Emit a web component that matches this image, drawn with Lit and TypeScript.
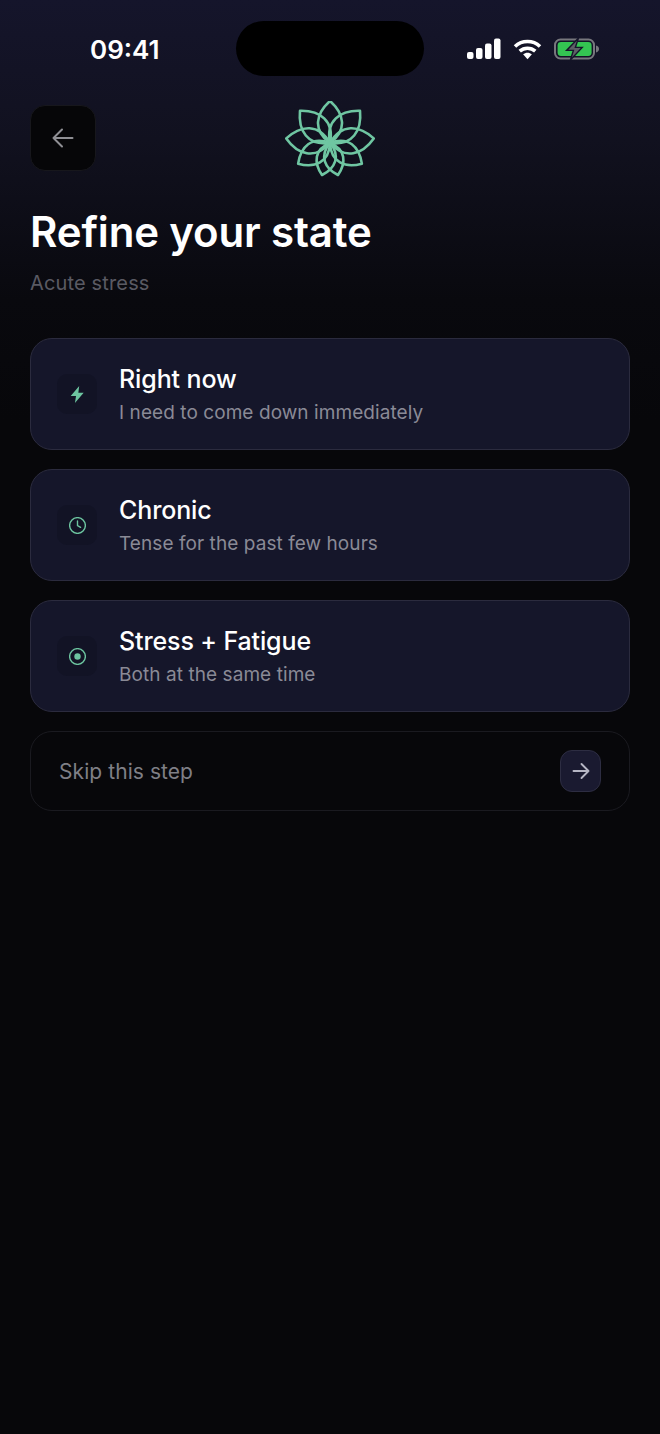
import { LitElement, css, html, svg } from "lit";
import { customElement } from "lit/decorators.js";

type Choice = {
  title: string;
  detail: string;
  icon: unknown;
};

const boltIcon = svg`<path d="M9.6 0 1.6 9.4h5L5.6 16l8.2-9.6h-5L9.6 0Z" fill="#6dc5a0" />`;
const clockIcon = svg`
  <circle cx="8" cy="8" r="7.4" fill="none" stroke="#6dc5a0" stroke-width="1.3" />
  <path d="M8 3.8V8l2.9 1.7" fill="none" stroke="#6dc5a0" stroke-width="1.3" stroke-linecap="round" />`;
const targetIcon = svg`
  <circle cx="8" cy="8" r="7.4" fill="none" stroke="#6dc5a0" stroke-width="1.3" />
  <circle cx="8" cy="8" r="3" fill="#6dc5a0" />`;

const choices: Choice[] = [
  { title: "Right now", detail: "I need to come down immediately", icon: boltIcon },
  { title: "Chronic", detail: "Tense for the past few hours", icon: clockIcon },
  { title: "Stress + Fatigue", detail: "Both at the same time", icon: targetIcon },
];

// petal angle and length, measured off the logo
const petals = [
  [0, 42],
  [-43, 44],
  [43, 44],
  [-84, 44],
  [84, 44],
  [-123, 38],
  [123, 38],
  [-166, 33],
  [166, 33],
];

@customElement("app-root")
export class AppRoot extends LitElement {
  renderStatusBar() {
    return html`<div class="status">
      <span class="time">09:41</span>
      <div class="island"></div>
      <div class="status-icons">
        <svg width="34" height="22" viewBox="0 0 34 22">
          <rect x="0" y="14" width="6.5" height="7" rx="2" fill="#fff" />
          <rect x="9" y="10" width="6.5" height="11" rx="2" fill="#fff" />
          <rect x="18" y="5.5" width="6.5" height="15.5" rx="2" fill="#fff" />
          <rect x="27" y="0.5" width="6.5" height="20.5" rx="2" fill="#fff" />
        </svg>
        <svg width="29" height="21" viewBox="0 0 28 21">
          <path d="M1.5 7.5C8.5 .9 19.5 .9 26.5 7.5" fill="none" stroke="#fff" stroke-width="3.6" />
          <path d="M6.2 12.2C10.7 8.2 17.3 8.2 21.8 12.2" fill="none" stroke="#fff" stroke-width="3.6" />
          <path d="M9.6 15.2C12.2 13.1 15.8 13.1 18.4 15.2L14 20.3Z" fill="#fff" />
        </svg>
        <svg width="46" height="22" viewBox="0 0 46 22">
          <rect x="1" y="1.5" width="39" height="19" rx="5.5" fill="none" stroke="#77777d" stroke-width="2" />
          <rect x="3.6" y="4" width="34" height="14" rx="3.4" fill="#34c452" />
          <path d="M42 7.5c2 .6 3 1.9 3 3.5s-1 2.9-3 3.5Z" fill="#77777d" />
          <path d="M24.5 0 12.6 12.4h6.8L16.4 22l11.8-12.6h-6.8L24.5 0Z" fill="#5d5f66" stroke="#15152a" stroke-width="1.4" />
        </svg>
      </div>
    </div>`;
  }

  renderLogo() {
    return html`<svg class="logo" width="92" height="80" viewBox="-46 -42 92 80">
      ${petals.map(
        ([angle, len]) => svg`<path
          transform="rotate(${angle})"
          d="M0 0C${-len * 0.42} ${-len * 0.3} ${-len * 0.34} ${-len * 0.7} 0 ${-len}C${len * 0.34} ${-len * 0.7} ${len * 0.42} ${-len * 0.3} 0 0Z"
          fill="none"
          stroke="#6fc6a2"
          stroke-width="2.6"
          stroke-linejoin="round"
        />`,
      )}
    </svg>`;
  }

  render() {
    return html`<div class="screen">
      ${this.renderStatusBar()}
      <header class="nav">
        <button class="back" aria-label="Back">
          <svg width="24" height="24" viewBox="0 0 24 24">
            <path d="M21.5 12H2.5M11 3.5 2.5 12l8.5 8.5" fill="none" stroke="#8f8f94" stroke-width="2" stroke-linecap="round" stroke-linejoin="round" />
          </svg>
        </button>
        ${this.renderLogo()}
      </header>
      <h1>Refine your state</h1>
      <p class="subtitle">Acute stress</p>
      <div class="list">
        ${choices.map(
          (choice) => html`<div class="card">
            <div class="icon-box">
              <svg width="17" height="17" viewBox="0 0 16 16">${choice.icon}</svg>
            </div>
            <div class="card-text">
              <div class="card-title">${choice.title}</div>
              <div class="card-detail">${choice.detail}</div>
            </div>
          </div>`,
        )}
        <div class="skip">
          <span>Skip this step</span>
          <div class="skip-btn">
            <svg width="18" height="18" viewBox="0 0 18 18">
              <path d="M1.5 9H16.5M9.5 2l7 7-7 7" fill="none" stroke="#b6b6c4" stroke-width="1.9" stroke-linecap="round" stroke-linejoin="round" />
            </svg>
          </div>
        </div>
      </div>
    </div>`;
  }

  static styles = css`
    :host {
      display: block;
      font-family: Inter, "Liberation Sans", sans-serif;
    }
    .screen {
      position: relative;
      box-sizing: border-box;
      width: 660px;
      height: 1434px;
      padding: 0 30px;
      overflow: hidden;
      background: linear-gradient(180deg, #15152b 0, #11111f 140px, #09090e 300px, #07070a 420px);
    }
    .status {
      display: flex;
      align-items: center;
      justify-content: space-between;
      height: 98px;
      padding: 0 30px 0 60px;
      margin-bottom: 8px;
    }
    .time {
      font-size: 26px;
      font-weight: 600;
      color: #fff;
    }
    .island {
      position: absolute;
      left: 236px;
      top: 21px;
      width: 188px;
      height: 55px;
      border-radius: 28px;
      background: #000;
    }
    .status-icons {
      display: flex;
      align-items: center;
      gap: 12px;
    }
    .nav {
      position: relative;
      display: flex;
      align-items: center;
      height: 64px;
    }
    .back {
      display: flex;
      align-items: center;
      justify-content: center;
      box-sizing: border-box;
      width: 66px;
      height: 66px;
      padding: 0;
      border: 1px solid #17171c;
      border-radius: 15px;
      background: #060608;
    }
    .logo {
      position: absolute;
      left: 254px;
      top: -5px;
    }
    h1 {
      margin: 34px 0 0;
      font-size: 42px;
      line-height: 56px;
      font-weight: 600;
      letter-spacing: -0.15px;
      color: #fff;
    }
    .subtitle {
      margin: 9px 0 0;
      font-size: 20px;
      line-height: 28px;
      letter-spacing: 0.15px;
      color: #5a5a63;
    }
    .list {
      display: flex;
      flex-direction: column;
      gap: 19px;
      margin-top: 41px;
    }
    .card {
      display: flex;
      align-items: center;
      gap: 22px;
      box-sizing: border-box;
      height: 112px;
      padding: 0 26px;
      border: 1px solid #2b2b3e;
      border-radius: 22px;
      background: #15162a;
    }
    .icon-box {
      display: flex;
      align-items: center;
      justify-content: center;
      width: 40px;
      height: 40px;
      border-radius: 10px;
      background: #121325;
    }
    .card-text {
      display: flex;
      flex-direction: column;
      gap: 3px;
    }
    .card-title {
      font-size: 25px;
      line-height: 34px;
      font-weight: 500;
      letter-spacing: -0.12px;
      color: #fff;
    }
    .card-detail {
      font-size: 19px;
      line-height: 28px;
      letter-spacing: 0.07px;
      color: #8a8a96;
    }
    .skip {
      display: flex;
      align-items: center;
      justify-content: space-between;
      box-sizing: border-box;
      height: 80px;
      padding: 0 28px;
      border: 1px solid #1a1a20;
      border-radius: 22px;
      font-size: 21px;
      letter-spacing: 0.07px;
      color: #7f7f86;
    }
    .skip-btn {
      display: flex;
      align-items: center;
      justify-content: center;
      box-sizing: border-box;
      width: 41px;
      height: 42px;
      border: 1px solid #2d2d42;
      border-radius: 12px;
      background: #1a1a30;
    }
  `;
}
